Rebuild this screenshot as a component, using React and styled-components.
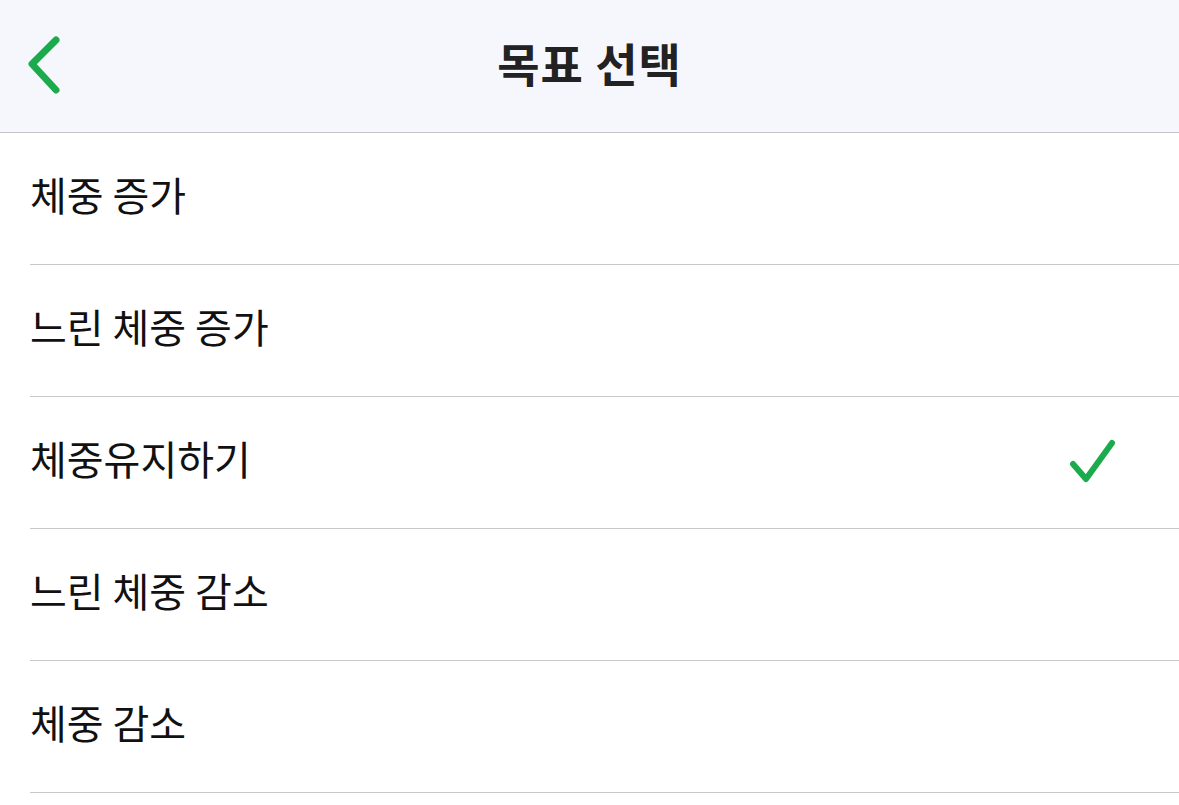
import React, { useState } from 'react';
import styled, { createGlobalStyle } from 'styled-components';

const GlobalStyle = createGlobalStyle`
  html, body {
    margin: 0;
    padding: 0;
    background: #ffffff;
    font-family: "Noto Sans CJK KR", "Noto Sans", sans-serif;
  }
`;

const Page = styled.div`
  width: 100%;
  min-height: 100vh;
  background: #ffffff;
`;

const NavBar = styled.header`
  height: 132px;
  background: #f6f7fc;
  border-bottom: 1px solid #c6c6ca;
  display: grid;
  grid-template-columns: 120px 1fr 120px;
  align-items: center;
`;

const BackButton = styled.button`
  border: none;
  background: none;
  padding: 0 0 0 24px;
  display: flex;
  align-items: center;
  cursor: pointer;
  height: 100%;
`;

const Title = styled.h1`
  margin: 0 0 8px;
  text-align: center;
  font-size: 46px;
  font-weight: 700;
  color: #222222;
  letter-spacing: 1px;
`;

const List = styled.ul`
  list-style: none;
  margin: 0;
  padding: 0 0 0 30px;
`;

const Row = styled.li`
  height: 131px;
  border-bottom: 1px solid #c8c8cc;
  display: flex;
  align-items: center;
  justify-content: space-between;
  padding-right: 60px;
  cursor: pointer;
`;

const Label = styled.span`
  font-size: 40px;
  color: #111111;
  margin-bottom: 10px;
`;

const Check = styled.svg`
  margin-bottom: 2px;
`;

const GREEN = '#1bab4c';

const goals = ['체중 증가', '느린 체중 증가', '체중유지하기', '느린 체중 감소', '체중 감소'];

export default function App() {
  const [selected, setSelected] = useState(2);

  return (
    <Page>
      <GlobalStyle />
      <NavBar>
        <BackButton aria-label="back">
          <svg width="40" height="64" viewBox="0 0 40 64">
            <polyline points="32,6 8,30 32,56" fill="none" stroke={GREEN} strokeWidth="7" strokeLinecap="round" strokeLinejoin="round" />
          </svg>
        </BackButton>
        <Title>목표 선택</Title>
        <div />
      </NavBar>
      <List>
        {goals.map((g, i) => (
          <Row key={g} onClick={() => setSelected(i)}>
            <Label>{g}</Label>
            {selected === i && (
              <Check width="52" height="50" viewBox="0 0 52 50">
                <polyline points="6,27 19,42 45,6" fill="none" stroke={GREEN} strokeWidth="6" strokeLinecap="round" strokeLinejoin="round" />
              </Check>
            )}
          </Row>
        ))}
      </List>
    </Page>
  );
}
